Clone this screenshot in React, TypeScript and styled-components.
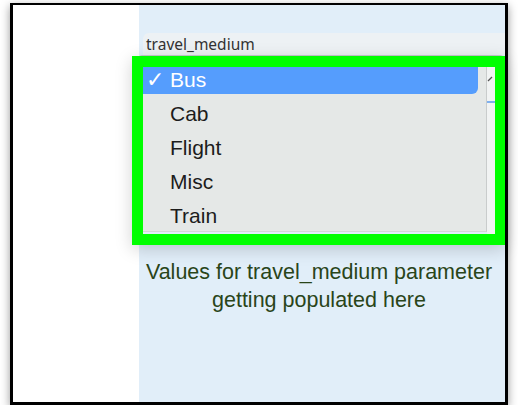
import styled, { createGlobalStyle } from 'styled-components';

const options = ['Bus', 'Cab', 'Flight', 'Misc', 'Train'];
const selected = 'Bus';

export default function App() {
    return (
        <>
            <GlobalStyle />
            <Frame>
                <SidePane />
                <MainPane>
                    <LabelCard>
                        <Label>travel_medium</Label>
                    </LabelCard>
                    <SelectBox />
                    <Caption>
                        Values for travel_medium parameter
                        <br />
                        getting populated here
                    </Caption>
                </MainPane>
                <Highlight>
                    <MenuPanel>
                        {options.map((o) => (
                            <Option key={o} active={o === selected}>
                                <Check>{o === selected ? '✓' : ''}</Check>
                                {o}
                            </Option>
                        ))}
                    </MenuPanel>
                    <SelectEdge>
                        <svg width="8" height="8" viewBox="0 0 8 8">
                            <path d="M1 6 L5 2" stroke="#555" strokeWidth="1.2" fill="none" />
                        </svg>
                        <FocusLine />
                    </SelectEdge>
                </Highlight>
            </Frame>
        </>
    );
}

const GlobalStyle = createGlobalStyle`
  html, body {
    margin: 0;
    padding: 0;
    background: #ffffff;
  }
  body {
    font-family: "Liberation Sans", Arial, sans-serif;
  }
`;

const Frame = styled.div`
  position: relative;
  margin: 3px 0 0 10px;
  width: 498px;
  height: 402px;
  box-sizing: border-box;
  border-style: solid;
  border-color: #000;
  border-width: 2px 3px 3px 3px;
  display: grid;
  grid-template-columns: 126px 1fr;
  box-shadow: 0 3px 9px rgba(0, 0, 0, 0.4);
`;

const SidePane = styled.div`
  background: #ffffff;
`;

const MainPane = styled.div`
  background: #e1eef9;
  padding: 28px 0 0 4px;
  display: flex;
  flex-direction: column;
  min-width: 0;
`;

const LabelCard = styled.div`
  height: 22px;
  background: #edf1f4;
  border-radius: 6px 0 0 0;
  padding-left: 3px;
`;

const Label = styled.span`
  font-family: "Noto Sans", sans-serif;
  font-size: 15.5px;
  line-height: 23px;
  color: #333;
`;

const SelectBox = styled.div`
  margin-left: -6px;
  height: 48px;
  background: #fafafa;
  border: 1px solid #c4c8cc;
  border-radius: 5px;
  box-sizing: border-box;
`;

const Caption = styled.div`
  margin: 155px 10px 0 0;
  text-align: center;
  white-space: nowrap;
  font-family: "Liberation Sans", Arial, sans-serif;
  font-size: 21.5px;
  line-height: 28px;
  color: #294519;
`;

const Highlight = styled.div`
  position: absolute;
  left: 119px;
  top: 51px;
  width: 373px;
  height: 189px;
  box-sizing: border-box;
  border: solid #00ff00;
  border-width: 11px 10px 11px 11px;
  display: flex;
  overflow: hidden;
  box-shadow: 0 4px 16px rgba(0, 0, 0, 0.18);
`;

const MenuPanel = styled.div`
  width: 344px;
  height: 166px;
  box-sizing: border-box;
  background: #e5e8e7;
  border-right: 1px solid #c9cccc;
  border-bottom: 1px solid #d3d6d6;
  padding: 0 8px 0 0;
  margin-top: -1px;
  display: flex;
  flex-direction: column;
  gap: 6px;
`;

const Option = styled.div<{ active: boolean }>`
  height: 28px;
  display: flex;
  align-items: center;
  font-size: 21px;
  color: ${(p) => (p.active ? '#ffffff' : '#1c1c1c')};
  background: ${(p) => (p.active ? '#559dfd' : 'transparent')};
  border-radius: 0 0 6px 0;
`;

const Check = styled.span`
  width: 27px;
  padding-left: 3px;
  box-sizing: border-box;
  font-family: "DejaVu Sans", sans-serif;
  font-size: 22px;
  font-weight: bold;
  line-height: 1;
`;

const SelectEdge = styled.div`
  flex: 1;
  position: relative;
  background: #f1f3f3;
  display: flex;
  flex-direction: column;
  align-items: center;
  padding-top: 8px;
`;

const FocusLine = styled.div`
  margin-top: 18px;
  width: 100%;
  height: 2px;
  background: #7fb0ee;
`;
